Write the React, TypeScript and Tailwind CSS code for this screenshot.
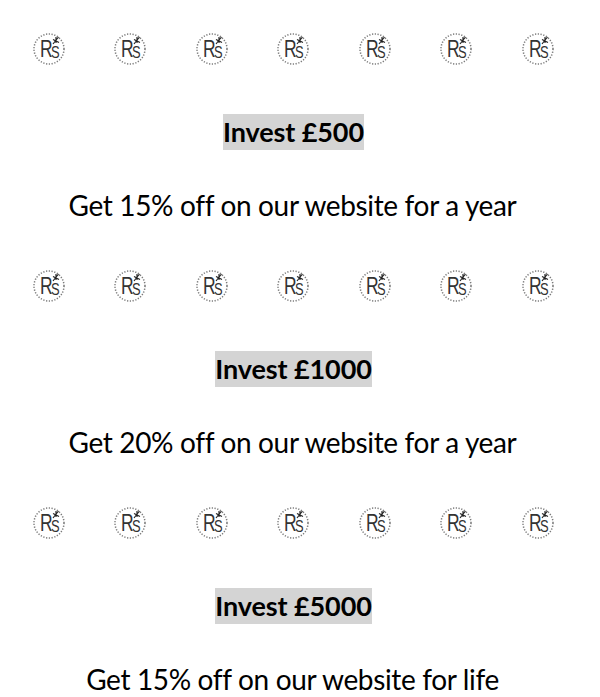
const font = "font-['Lato','Open_Sans',sans-serif]";

function Logo() {
  return (
    <svg width="34" height="34" viewBox="0 0 34 34" className="shrink-0">
      <circle cx="17" cy="17" r="15" fill="none" stroke="#777" strokeWidth="1.5" strokeDasharray="1.2 1.6" />
      <text x="0" y="0" transform="translate(8 25) scale(0.76 1)" fontFamily="'Liberation Sans',sans-serif" fill="#333">
        <tspan fontSize="23">R</tspan>
        <tspan fontSize="17" dx="-2" dy="1">S</tspan>
      </text>
      <path d="M21 12 L26.5 5 M21 7.5 L27 10.5 M24 5 L24 11" stroke="#222" strokeWidth="1.2" fill="none" />
    </svg>
  );
}

function LogoRow() {
  return (
    <div className="flex h-[34px] w-[523px] justify-between">
      {[0, 1, 2, 3, 4, 5, 6].map((i) => (
        <Logo key={i} />
      ))}
    </div>
  );
}

function Section({ title, text }: { title: string; text: string }) {
  return (
    <section className="flex h-[237px] flex-col items-center">
      <div className="mt-[32px] ml-[1px] flex w-full justify-center">
        <LogoRow />
      </div>
      <h2 className={`mt-[48px] ml-[2px] bg-[#d4d4d4] text-[27px] leading-[36px] font-bold tracking-[-0.1px] text-black ${font}`}>
        {title}
      </h2>
      <p className={`mt-[37px] text-[28px] leading-[36px] tracking-[-0.35px] text-black ${font}`}>{text}</p>
    </section>
  );
}

export default function App() {
  return (
    <main className="h-[697px] w-[600px] overflow-hidden bg-white pr-[15px]">
      <Section title="Invest £500" text="Get 15% off on our website for a year" />
      <Section title="Invest £1000" text="Get 20% off on our website for a year" />
      <Section title="Invest £5000" text="Get 15% off on our website for life" />
    </main>
  );
}
